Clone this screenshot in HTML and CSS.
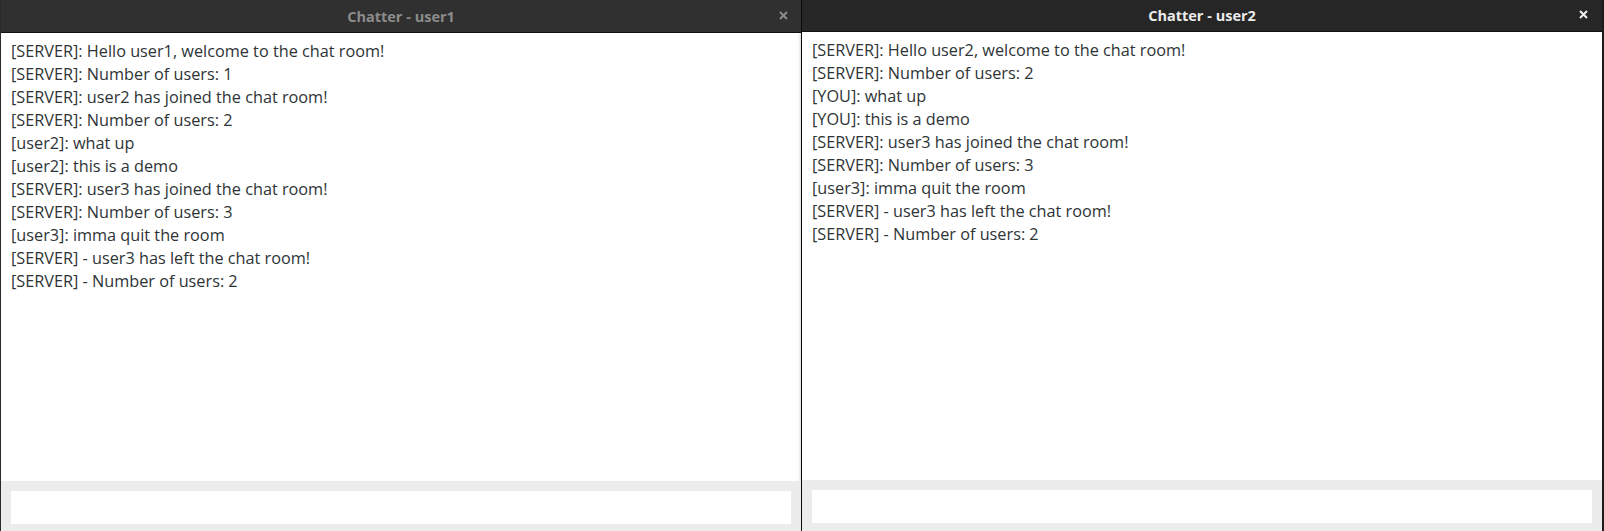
FILE: index.html
```html
<!DOCTYPE html>
<html>
<head>
<meta charset="utf-8">
<link rel="stylesheet" href="styles.css">
</head>
<body>
<div class="desk">
  <div class="win win-inactive">
    <div class="titlebar">
      <span class="title">Chatter - user1</span>
      <svg class="close" width="9" height="9" viewBox="0 0 9 9"><path d="M1 1L8 8M8 1L1 8" stroke="currentColor" stroke-width="2" fill="none"/></svg>
    </div>
    <div class="log">
      <div>[SERVER]: Hello user1, welcome to the chat room!</div>
      <div>[SERVER]: Number of users: 1</div>
      <div>[SERVER]: user2 has joined the chat room!</div>
      <div>[SERVER]: Number of users: 2</div>
      <div>[user2]: what up</div>
      <div>[user2]: this is a demo</div>
      <div>[SERVER]: user3 has joined the chat room!</div>
      <div>[SERVER]: Number of users: 3</div>
      <div>[user3]: imma quit the room</div>
      <div>[SERVER] - user3 has left the chat room!</div>
      <div>[SERVER] - Number of users: 2</div>
    </div>
    <div class="inputbar"><div class="input"></div></div>
  </div>
  <div class="win win-active">
    <div class="titlebar">
      <span class="title">Chatter - user2</span>
      <svg class="close" width="9" height="9" viewBox="0 0 9 9"><path d="M1 1L8 8M8 1L1 8" stroke="currentColor" stroke-width="2" fill="none"/></svg>
    </div>
    <div class="log">
      <div>[SERVER]: Hello user2, welcome to the chat room!</div>
      <div>[SERVER]: Number of users: 2</div>
      <div>[YOU]: what up</div>
      <div>[YOU]: this is a demo</div>
      <div>[SERVER]: user3 has joined the chat room!</div>
      <div>[SERVER]: Number of users: 3</div>
      <div>[user3]: imma quit the room</div>
      <div>[SERVER] - user3 has left the chat room!</div>
      <div>[SERVER] - Number of users: 2</div>
    </div>
    <div class="inputbar"><div class="input"></div></div>
  </div>
</div>
</body>
</html>
```
FILE: styles.css
```css
html, body {
  margin: 0;
  padding: 0;
  background: #1a1a1a;
  overflow: hidden;
}
.desk {
  display: flex;
  height: 531px;
  width: 1604px;
}
.win {
  display: flex;
  flex-direction: column;
  background: #ffffff;
  height: 531px;
  box-sizing: border-box;
}
.win-inactive {
  width: 801px;
  border-left: 1px solid #2a2a2a;
  box-shadow: inset -3px 0 3px -2px rgba(0,0,0,0.18);
}
.win-active {
  width: 803px;
  border-left: 1px solid #0a0a0a;
  border-right: 2px solid #1c1c1c;
}
.titlebar {
  position: relative;
  display: flex;
  align-items: center;
  justify-content: center;
  flex: none;
  font-family: "Open Sans", "Noto Sans", sans-serif;
  font-weight: 700;
  font-size: 14.5px;
  border-bottom: 1px solid #111;
}
.win-inactive .titlebar {
  height: 32px;
  background: #303030;
  color: #8c8c8c;
}
.win-active .titlebar {
  height: 31px;
  background: #262626;
  color: #ececec;
}
.close {
  position: absolute;
  top: 11px;
}
.win-inactive .close { color: #8c8c8c; right: 13px; }
.win-active .close { color: #f0f0f0; right: 14px; top: 10px; }
.log {
  flex: 1;
  padding: 7px 10px 5px;
  font-family: "Open Sans", "Noto Sans", sans-serif;
  font-size: 16.25px;
  line-height: 23px;
  color: #2e3436;
}
.inputbar {
  flex: none;
  background: #ececec;
  height: 50px;
  padding: 10px 10px 7px 10px;
  box-sizing: border-box;
}
.win-active .inputbar {
  height: 51px;
}
.input {
  background: #ffffff;
  height: 33px;
}
```
